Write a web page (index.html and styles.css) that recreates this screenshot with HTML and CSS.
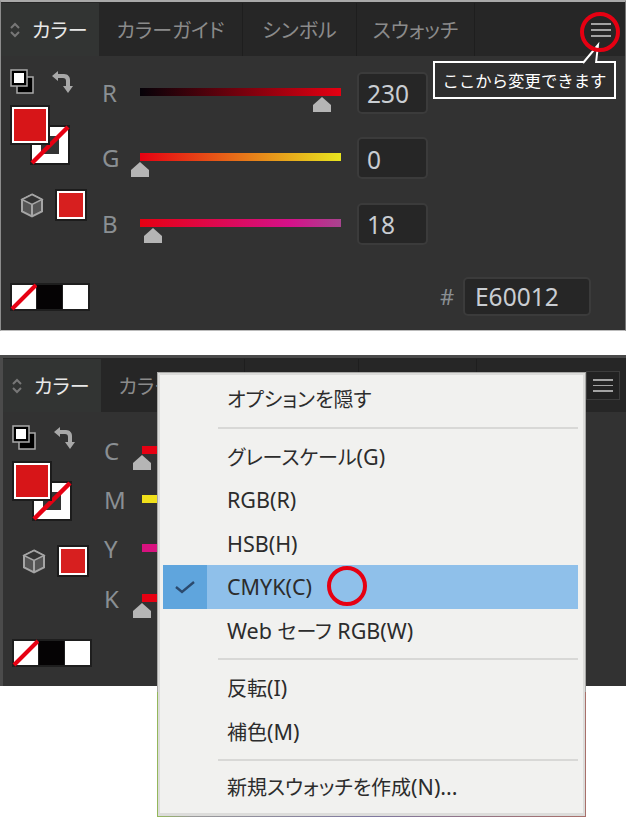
FILE: index.html
```html
<!DOCTYPE html>
<html lang="ja">
<head>
<meta charset="utf-8">
<title>カラーパネル</title>
<link rel="stylesheet" href="styles.css">
</head>
<body>
<svg class="defs" width="0" height="0" aria-hidden="true">
  <defs>
    <symbol id="updown" viewBox="0 0 12 18"><path d="M2 7l4-4 4 4M2 11l4 4 4-4" fill="none" stroke="#777" stroke-width="2"/></symbol>
    <symbol id="defcolors" viewBox="0 0 24 25">
      <rect x="7" y="8" width="16" height="16" fill="#000" stroke="#aaa" stroke-width="1.5"/>
      <rect x="1" y="1" width="16" height="16" fill="#000" stroke="#aaa" stroke-width="1.5"/>
      <rect x="4" y="4" width="10" height="10" fill="#fff"/>
    </symbol>
    <symbol id="swap" viewBox="0 0 24 24">
      <path d="M1 6l6-5v3h6c4 0 6 3 6 6v6h3l-5 7-5-7h3v-5c0-2-1-3-3-3H7v3z" fill="#a8a8a8"/>
    </symbol>
    <symbol id="stack" viewBox="0 0 60 60">
      <rect x="20" y="20" width="40" height="40" fill="#1c1c1c"/>
      <rect x="22" y="22" width="36" height="36" fill="#fff"/>
      <rect x="31" y="31" width="18" height="18" fill="#333"/>
      <path d="M22 58L58 22" stroke="#e60012" stroke-width="4.5"/>
      <rect x="0" y="0" width="40" height="40" fill="#1c1c1c"/>
      <rect x="2" y="2" width="36" height="36" fill="#fff"/>
      <rect x="4" y="4" width="32" height="32" fill="#d71518"/>
    </symbol>
    <symbol id="cube" viewBox="0 0 24 25">
      <path d="M12 1.5l10 5v12l-10 5-10-5v-12z" fill="#555" stroke="#a5a5a5" stroke-width="2"/>
      <path d="M2 6.5l10 5 10-5-10-5z" fill="#333" stroke="#a5a5a5" stroke-width="1.5"/>
      <path d="M12 11.5v12" stroke="#a5a5a5" stroke-width="2"/>
    </symbol>
    <symbol id="strip" viewBox="0 0 80 28">
      <rect width="80" height="28" fill="#1e1e1e"/>
      <rect x="2" y="2" width="24" height="24" fill="#fff"/>
      <path d="M2 26L26 2" stroke="#e60012" stroke-width="4"/>
      <rect x="27" y="2" width="25" height="24" fill="#050304"/>
      <rect x="53" y="2" width="25" height="24" fill="#fff"/>
    </symbol>
    <symbol id="thumb" viewBox="0 0 18 15"><path d="M9 0l9 8v7H0V8z" fill="#b5b5b5"/></symbol>
  </defs>
</svg>

<main class="page">
  <section class="panel panel-a">
    <header class="tabs">
      <div class="tab tab-active"><svg class="updown"><use href="#updown"/></svg>カラー</div>
      <div class="tab tab-guide">カラーガイド</div>
      <div class="tab tab-symbol">シンボル</div>
      <div class="tab tab-swatch">スウォッチ</div>
      <div class="tab-rest"><span class="burger"><i></i><i></i><i></i></span></div>
    </header>
    <div class="body">
      <aside class="tools">
        <div class="tool-row"><svg class="ic-def"><use href="#defcolors"/></svg><svg class="ic-swap"><use href="#swap"/></svg></div>
        <svg class="ic-stack"><use href="#stack"/></svg>
        <div class="gamut"><svg class="ic-cube"><use href="#cube"/></svg><span class="mini"></span></div>
        <svg class="ic-strip"><use href="#strip"/></svg>
      </aside>
      <div class="sliders">
        <div class="row">
          <span class="lab">R</span>
          <div class="track"><div class="bar bar-r"></div><svg class="thumb" style="left:173px"><use href="#thumb"/></svg></div>
          <span class="val">230</span>
        </div>
        <div class="row">
          <span class="lab">G</span>
          <div class="track"><div class="bar bar-g"></div><svg class="thumb" style="left:-9px"><use href="#thumb"/></svg></div>
          <span class="val">0</span>
        </div>
        <div class="row">
          <span class="lab">B</span>
          <div class="track"><div class="bar bar-b"></div><svg class="thumb" style="left:4px"><use href="#thumb"/></svg></div>
          <span class="val">18</span>
        </div>
        <div class="hex"><span class="lab-hash">#</span><span class="val val-hex">E60012</span></div>
      </div>
    </div>
    <div class="callout">
      <svg class="tail" width="40" height="24" viewBox="0 0 40 24"><path d="M6 22L21 4l-2 18" fill="#2e2e2e" stroke="#fff" stroke-width="2"/></svg>
      ここから変更できます
    </div>
    <span class="ring ring-top"></span>
  </section>

  <section class="panel panel-b">
    <header class="tabs">
      <div class="tab tab-active"><svg class="updown"><use href="#updown"/></svg>カラー</div>
      <div class="tab tab-guide">カラーガイド</div>
      <div class="tab tab-symbol">シンボル</div>
      <div class="tab tab-swatch">スウォッチ</div>
      <div class="tab-rest"><span class="burger burger-box"><i></i><i></i><i></i></span></div>
    </header>
    <div class="body">
      <aside class="tools">
        <div class="tool-row"><svg class="ic-def"><use href="#defcolors"/></svg><svg class="ic-swap"><use href="#swap"/></svg></div>
        <svg class="ic-stack"><use href="#stack"/></svg>
        <div class="gamut"><svg class="ic-cube"><use href="#cube"/></svg><span class="mini"></span></div>
        <svg class="ic-strip"><use href="#strip"/></svg>
      </aside>
      <div class="sliders sliders-cmyk">
        <div class="row"><span class="lab">C</span><div class="track"><div class="bar bar-c"></div><svg class="thumb" style="left:-9px"><use href="#thumb"/></svg></div></div>
        <div class="row"><span class="lab">M</span><div class="track"><div class="bar bar-m"></div></div></div>
        <div class="row"><span class="lab">Y</span><div class="track"><div class="bar bar-y"></div></div></div>
        <div class="row"><span class="lab">K</span><div class="track"><div class="bar bar-c"></div><svg class="thumb" style="left:-9px"><use href="#thumb"/></svg></div></div>
      </div>
    </div>
  </section>

  <nav class="menu">
    <div class="menu-inner">
      <div class="item"><span>オプションを隠す</span></div>
      <hr class="sep">
      <div class="item"><span>グレースケール<span class="lat">(G)</span></span></div>
      <div class="item"><span class="lat">RGB(R)</span></div>
      <div class="item"><span class="lat">HSB(H)</span></div>
      <div class="item item-on"><span class="check"><svg width="22" height="16" viewBox="0 0 22 16"><path d="M2 8l6 5L20 3" fill="none" stroke="#2b4a6e" stroke-width="2.4"/></svg></span><span class="lat">CMYK(C)</span><span class="ring ring-menu"></span></div>
      <div class="item"><span><span class="lat">Web </span>セーフ<span class="lat"> RGB(W)</span></span></div>
      <hr class="sep">
      <div class="item"><span>反転<span class="lat">(I)</span></span></div>
      <div class="item"><span>補色<span class="lat">(M)</span></span></div>
      <hr class="sep sep-last">
      <div class="item"><span>新規スウォッチを作成<span class="lat">(N)...</span></span></div>
    </div>
  </nav>
</main>
</body>
</html>
```
FILE: styles.css
```css
* { box-sizing: border-box; }
html, body { margin: 0; padding: 0; background: #fff; }
body { font-family: "Noto Sans CJK JP", "Noto Sans", sans-serif; }
.defs { position: absolute; }
.page { position: relative; width: 626px; height: 817px; overflow: hidden; display: flex; flex-direction: column; gap: 24px; }

.panel { position: relative; height: 331px; background: #323232; display: flex; flex-direction: column; flex: none; }
.panel-a { border-top: 2px solid #a9a9a9; border-left: 1px solid #8c8c8c; border-right: 1px solid #777; border-bottom: 1px solid #bbb; }
.panel-b { border-top: 3px solid #4a4a4a; border-left: 3px solid #4b4b4b; }

.tabs { display: flex; height: 54px; background: #262626; padding-top: 1px; flex: none; }
.tab { display: flex; align-items: center; justify-content: center; height: 100%; color: #8b8b8b; font-size: 20px; font-feature-settings: "palt"; border-right: 1px solid #1e1e1e; white-space: nowrap; }
.tab-active { width: 98px; background: #323433; color: #e8e8e8; gap: 11px; border-right: 0; justify-content: flex-start; padding-left: 8px; }
.tab-guide { width: 144px; }
.tab-symbol { width: 114px; }
.tab-swatch { width: 118px; }
.updown { width: 12px; height: 18px; }
.tab-rest { flex: 1; display: flex; align-items: center; justify-content: flex-end; padding-right: 14px; }
.burger { display: flex; flex-direction: column; gap: 4px; width: 20px; }
.burger i { display: block; height: 2px; background: #a3a3a3; }
.panel-b .tab-rest { padding-right: 6px; }
.burger-box { width: 34px; height: 29px; padding: 7px 6px; gap: 4px; background: #222; border: 1px solid #3c3c3c; }

.body { display: flex; flex: 1; min-height: 0; }
.tools { width: 99px; flex: none; padding: 13px 0 0 9px; display: flex; flex-direction: column; }
.tool-row { display: flex; align-items: center; gap: 17px; height: 25px; }
.ic-def { width: 24px; height: 25px; }
.ic-swap { width: 24px; height: 24px; }
.ic-stack { width: 60px; height: 60px; margin-top: 11px; }
.gamut { display: flex; align-items: center; gap: 12px; margin: 25px 0 0 10px; }
.ic-cube { width: 24px; height: 25px; }
.mini { width: 30px; height: 30px; background: #d71f1f; border: 3px solid #fff; outline: 2px solid #1c1c1c; outline-offset: -1px; }
.ic-strip { width: 80px; height: 28px; margin-top: 63px; }

.sliders { flex: 1; display: flex; flex-direction: column; padding: 4px 0 0 2px; }
.row { display: flex; align-items: center; height: 65.5px; flex: none; }
.lab { width: 38px; color: #8a8f93; font: 24px/1 "Noto Sans", sans-serif; flex: none; }
.track { position: relative; width: 201px; height: 42px; flex: none; }
.bar { position: absolute; left: 0; right: 0; top: 16px; height: 8px; }
.bar-r { background: linear-gradient(90deg, #050208, #e60012); }
.bar-g { background: linear-gradient(90deg, #e60012, #e8e51f); }
.bar-b { background: linear-gradient(90deg, #e60012, #d5118a 75%, #a8448f); }
.bar-c { background: #e60012; }
.bar-m { background: #f0e01a; }
.bar-y { background: #d8127f; }
.thumb { position: absolute; top: 25px; width: 18px; height: 15px; }
.val { margin-left: 16px; width: 71px; height: 42px; display: flex; align-items: center; padding: 3px 0 0 8px; background: #262626; border: 2px solid #3b3b3b; border-radius: 5px; color: #c9cdd2; font: 24.5px/1 "Noto Sans", sans-serif; }
.hex { display: flex; align-items: center; justify-content: flex-end; margin-top: 20px; padding-right: 34px; }
.lab-hash { color: #8a8f93; font: 22px/1 "Noto Sans", sans-serif; width: 23px; }
.val-hex { margin-left: 0; width: 128px; height: 39px; padding-left: 10px; }

.sliders-cmyk { padding-top: 14px; }
.sliders-cmyk .row { height: 49.3px; }

.callout { position: absolute; left: 432px; top: 59px; width: 183px; height: 38px; display: flex; align-items: center; justify-content: center; background: #2e2e2e; border: 2px solid #fff; color: #fff; font-size: 16.4px; white-space: nowrap; }
.tail { position: absolute; left: 142px; top: -22px; }
.ring { position: absolute; width: 40px; height: 40px; border: 4px solid #e60012; border-radius: 50%; }
.ring-top { left: 579px; top: 10px; }
.ring-menu { left: 164px; top: 1px; }

.menu { position: absolute; left: 157px; top: 372px; width: 429px; height: 445px; padding: 1px; background: linear-gradient(180deg, #a8a8a6 0, #a8a8a6 72%, transparent 72%), linear-gradient(90deg, #93b85a 0, #9a9a9a 8%, #7f78a0 50%, #a8706a 100%); }
.menu-inner { height: 100%; background: #f1f1ef; border: 2px solid #dcdcda; border-bottom-width: 3px; padding: 2px 5px 0 3px; display: flex; flex-direction: column; }
.item { position: relative; height: 43.5px; flex: none; display: flex; align-items: center; padding-left: 64px; color: #2c2c2c; font-size: 20px; font-feature-settings: "palt"; white-space: pre; }
.lat { font-family: "Noto Sans", sans-serif; font-size: 21.5px; font-feature-settings: normal; }
.item-on { background: #8fc0ea; }
.check { position: absolute; left: 0; top: 0; width: 44px; height: 100%; display: flex; align-items: center; justify-content: center; background: #5fa5dd; }
.sep { border: 0; height: 2px; background: #d8d8d6; margin: 6px 0 6px 55px; flex: none; }
.sep-last { margin-bottom: 4px; }
```
